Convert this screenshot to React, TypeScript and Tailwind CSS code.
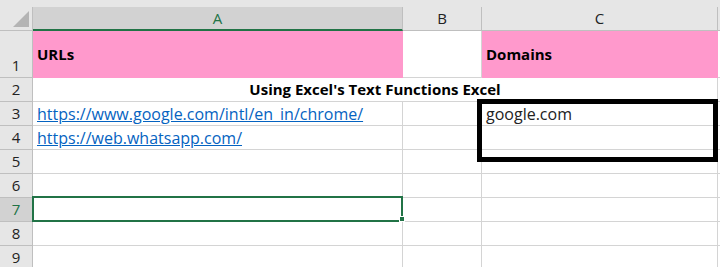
import React from "react";

const G = "border-[#d4d4d4]";

function RowHead({ n, h, selected, bottom }: { n: number; h: string; selected?: boolean; bottom?: boolean }) {
  return (
    <div
      className={`w-[33px] shrink-0 ${h} border-r border-b border-[#bfbfbf] flex justify-center ${bottom ? "items-end pb-[1px]" : "items-center"} ${selected ? "bg-[#d2d2d2] text-[#217346]" : "bg-[#e6e6e6] text-[#222]"} text-[15px]`}
    >
      {n}
    </div>
  );
}

export default function App() {
  return (
    <div className="w-[720px] h-[267px] overflow-hidden bg-white relative" style={{ fontFamily: '"Open Sans", "Noto Sans", sans-serif' }}>
      <div className="h-[7px] bg-[#e6e6e6]" />
      {/* column headers */}
      <div className="flex h-[24px]">
        <div className="w-[33px] shrink-0 bg-[#e6e6e6] border-r border-b border-[#bfbfbf] relative">
          <svg className="absolute left-[13px] top-[4px]" width="16" height="16" viewBox="0 0 16 16">
            <polygon points="16,0 16,16 0,16" fill="#b4b4b4" />
          </svg>
        </div>
        <div className="w-[370px] shrink-0 bg-[#d2d2d2] border-r border-[#bfbfbf] border-b-2 border-b-[#217346] flex items-center justify-center text-[15px] text-[#217346]">A</div>
        <div className="w-[79px] shrink-0 bg-[#e6e6e6] border-r border-b border-[#bfbfbf] flex items-center justify-center text-[15px] text-[#222]">B</div>
        <div className="w-[236px] shrink-0 bg-[#e6e6e6] border-r border-b border-[#bfbfbf] flex items-center justify-center text-[15px] text-[#222]">C</div>
        <div className="flex-1 bg-[#e6e6e6] border-b border-[#bfbfbf]" />
      </div>
      {/* row 1 */}
      <div className="flex h-[47px]">
        <RowHead n={1} h="h-[47px]" bottom />
        <div className="w-[370px] shrink-0 bg-[#ff99cc] flex items-center pl-[4px] font-bold text-[15px] text-black">URLs</div>
        <div className={`w-[79px] shrink-0 border-r border-b ${G}`} />
        <div className="w-[236px] shrink-0 bg-[#ff99cc] flex items-center pl-[4px] font-bold text-[15px] text-black">Domains</div>
        <div className={`flex-1 border-b ${G}`} />
      </div>
      {/* row 2 */}
      <div className="flex h-[24px]">
        <RowHead n={2} h="h-[24px]" />
        <div className={`w-[685px] shrink-0 border-r border-b ${G} flex items-center justify-center font-bold text-[15px] text-black`}>
          Using Excel's Text Functions Excel
        </div>
        <div className={`flex-1 border-b ${G}`} />
      </div>
      {[3, 4, 5, 6, 7, 8, 9].map((n) => (
        <div key={n} className="flex h-[24px]">
          <RowHead n={n} h="h-[24px]" selected={n === 7} />
          <div className={`w-[370px] shrink-0 border-r border-b ${G} flex items-center pl-[4px] text-[16px]`}>
            {n === 3 && <span className="text-[#0563c1] underline">https://www.google.com/intl/en_in/chrome/</span>}
            {n === 4 && <span className="text-[#0563c1] underline">https://web.whatsapp.com/</span>}
          </div>
          <div className={`w-[79px] shrink-0 border-r border-b ${G}`} />
          <div className={`w-[236px] shrink-0 border-r border-b ${G} flex items-center pl-[4px] text-[16px] text-[#222]`}>
            {n === 3 && "google.com"}
          </div>
          <div className={`flex-1 border-b ${G}`} />
        </div>
      ))}
      {/* selection A7 */}
      <div className="absolute left-[32px] top-[196px] w-[371px] h-[26px] border-2 border-[#217346]" />
      <div className="absolute left-[399px] top-[216px] w-[6px] h-[6px] bg-[#217346] border border-white" />
      {/* drawn black box */}
      <div className="absolute left-[477px] top-[99px] w-[241px] h-[63px] border-[5px] border-black" />
    </div>
  );
}
